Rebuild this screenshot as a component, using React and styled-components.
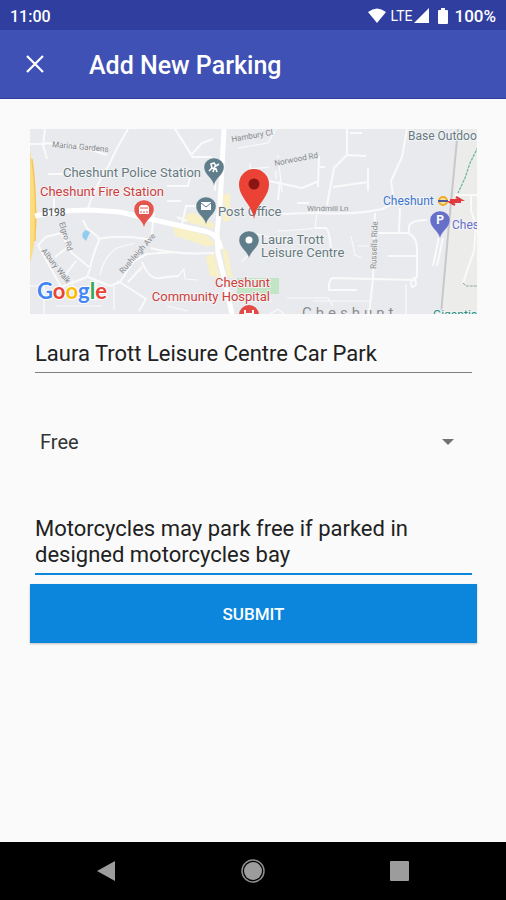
import React, { useState } from 'react'
import styled, { createGlobalStyle } from 'styled-components'

const pinColors = {
    civic: '#607d8b',
    alert: '#e5554f',
    parking: '#6670c8',
}

function Pin({x, y, kind, children}) {
    return (
        <g transform={`translate(${x} ${y})`}>
            <path
                d="M0 18C-1 10-10 7-10-1A10 9 0 0 1 10-1C10 7 1 10 0 18Z"
                fill={pinColors[kind]}
                stroke="#fff"
                strokeOpacity=".5"
                strokeWidth=".6"
            />
            {children}
        </g>
    )
}

function ParkingMap() {
    return (
        <MapStyled viewBox="0 0 447 185" preserveAspectRatio="xMidYMid slice" role="img" aria-label="Map of Cheshunt">
            <rect width="448" height="185" fill="#e9eaed" />
            <path d="M428 0L419 95L411 185H448V0Z" fill="#ececea" />
            <path d="M0 20Q5 55 7 88Q6 112 0 134Z" fill="#fbdc84" />
            <path d="M2 30Q7 65 5 112" fill="none" stroke="#f5c653" strokeWidth="1.5" />
            <path className="shop" d="M155 87L162 83L184 95V100L157 93ZM143 96L158 101L178 107L185 115L178 118L158 111L145 107ZM193 66L200 64L201 91L193 93ZM176 128L184 124L190 149L180 147ZM192 119L197 121L203 149L197 147Z" />
            <path d="M207 149H249V165H207Z" fill="#c1e5c5" />
            <path d="M55 101L60 103L56 112Q49 107 55 101Z" fill="#8fcdf3" />

            <g className="minor">
                <path d="M0 15H16M15 0L13 16L17 30M15 14L48 17L77 26M18 45H33M24 69V79" />
                <path d="M98 0Q85 22 79 36Q66 56 58 79M145 0L163 29" />
                <path d="M53 91L57 99L68 108L69 112Q63 124 60 140L57 148L31 158L8 116L16 108L31 104L42 124L59 138" />
                <path d="M68 110Q91 105 121 111L124 84M25 128L38 118M36 145L46 132M58 148L80 157L90 153L104 132L117 125L144 123" />
                <path className="thin" d="M70 146Q74 127 87 119L105 114M84 157V181M66 152V172M42 150L44 164L78 168" />
                <path d="M88 152L116 170L109 182M98 153L112 138M112 133Q120 154 135 148L149 147" />
                <path className="thin" d="M0 157H14V185M26 177H72M137 177L158 182M148 147L154 140L155 150L168 151" />
                <path d="M121 119Q143 126 184 124" />
                <path d="M145 0L163 28H182M161 26L172 14L183 10M137 57H158L161 45M137 72H151" />
                <path d="M152 95L156 77H168M185 48V62M147 88L157 92" />
                <path className="thin" d="M208 19L238 14L246 0M220 34V40L240 38M248 26L252 63M246 42L246 50" />
                <path d="M239 52L272 59L289 52M289 27L288 58M289 38H295M250 52L248 71M267 74H279" />
                <path className="thin" d="M222 104L239 108M219 107V126L212 132M203 172H242M247 102Q271 101 285 99L287 84" />
                <path d="M285 99H296Q299 101 301 119M242 83L254 85Q270 84 288 84V79" />
                <path d="M317 0V26L304 39L297 76M320 4H332M316 26L336 27M303 58L338 53M338 39V62" />
                <path d="M377 0L372 28L361 52L363 66M288 84Q326 86 352 80L376 69M345 84L343 150L339 185" />
                <path d="M348 104H378Q387 108 387 119V148Q379 150 382 158Q388 157 385 150M370 79L369 103M379 104V98Q380 91 397 91M358 127H387" />
                <path d="M299 162V154L302 149L385 151M300 161H327" />
                <path className="thin" d="M321 107L325 126L332 129M328 117H339M257 169H298L303 177M376 155V185" />
                <path d="M409 108L403 137M413 109L407 137M425 66H448M441 66V82L446 96L444 122L433 154" />
                <path className="thin" d="M283 172H340M240 185L248 180L254 185" />
            </g>
            <g className="major">
                <path d="M5 87Q29 81 60 81L90 83L133 93L178 103Q189 107 191 120" />
                <path d="M194 0L190 76L187 104L188 124L195 153L202 185" />
            </g>
            <g fill="none">
                <path d="M428 0L419 95L411 185" stroke="#c8c8ca" strokeWidth="2" />
                <path d="M448 18L440 34L435 49L428 64" stroke="#70b9a2" strokeWidth="1.3" strokeDasharray="3 1" />
                <path d="M433 154L436 157H448" stroke="#8ea79b" strokeDasharray="3 1" />
            </g>

            <g className="street">
                <text x="22" y="18" transform="rotate(5 22 18)">Marina Gardens</text>
                <text x="202" y="13" transform="rotate(-10 202 13)">Hambury Cl</text>
                <text x="245" y="37" transform="rotate(-11 245 37)">Norwood Rd</text>
                <text x="277" y="82">Windmill Ln</text>
                <text x="29" y="94" transform="rotate(73 29 94)">Elgro Rd</text>
                <text x="11" y="122" transform="rotate(52 11 122)">Albury Walk</text>
                <text x="93" y="145" transform="rotate(-49 93 145)">Rushleigh Ave</text>
                <text x="346" y="140" transform="rotate(-88 346 140)">Russells Ride</text>
            </g>
            <text className="route" x="12" y="87">B198</text>
            <g className="place">
                <text x="33" y="48">Cheshunt Police Station</text>
                <text x="188" y="87">Post Office</text>
                <text x="231" y="115">Laura Trott</text>
                <text x="231" y="128">Leisure Centre</text>
            </g>
            <text className="place small" x="378" y="11">Base Outdoor</text>
            <g className="place red">
                <text x="10" y="67">Cheshunt Fire Station</text>
                <text x="240" y="158" textAnchor="end">Cheshunt</text>
                <text x="240" y="172" textAnchor="end">Community Hospital</text>
            </g>
            <text className="place small blue" x="353" y="76">Cheshunt</text>
            <text className="place small violet" x="422" y="100">Cheshunt</text>
            <text className="town" x="272" y="189">Cheshunt</text>
            <text className="place small teal" x="403" y="190">Gigantic</text>

            <circle cx="413" cy="72" r="4" fill="#f3e3b0" stroke="#efad21" strokeWidth="2" />
            <path d="M408 72H418" stroke="#4b5a9d" strokeWidth="2" />
            <path d="M420 71H431L426 68M431 73H420L425 76" fill="none" stroke="#e0393e" strokeWidth="2.2" />

            <Pin x={184} y={39} kind="civic">
                <path d="M-5 3L-2 0L-3-4L0-5L2-2L5-4M-2 0L2 1L3 4M1-2L-1 4" fill="none" stroke="#fff" strokeWidth="1.6" />
            </Pin>
            <Pin x={176} y={78} kind="civic">
                <path d="M-5-5H5V3H-5Z" fill="#fff" />
                <path d="M-5-4L0 0L5-4" fill="none" stroke="#607d8b" />
            </Pin>
            <Pin x={219} y={112} kind="civic">
                <circle cy="-1" r="3.5" fill="#fff" />
            </Pin>
            <Pin x={114} y={81} kind="alert">
                <path d="M-5-3L-3-5H3L5-3V4H-5Z" fill="#fff" />
                <path d="M-4-2H4M-3 1V3M0 1V3M3 1V3" stroke="#e5554f" />
            </Pin>
            <Pin x={410} y={92} kind="parking">
                <text className="glyph" y="3">P</text>
            </Pin>
            <circle cx="219" cy="186" r="10" fill="#e34b46" />
            <path d="M215 190V181M223 190V181M215 185H223" stroke="#fff" strokeWidth="2" />

            <path d="M224 90C222 75 209 69 209 55A15 15 0 0 1 239 55C239 69 226 75 224 90Z" fill="#ea4335" />
            <circle cx="224" cy="55" r="5.500" fill="#8b1512" />

            <text className="google" x="7" y="170">
                <tspan fill="#4285f4">G</tspan>
                <tspan fill="#ea4335">o</tspan>
                <tspan fill="#fbbc05">o</tspan>
                <tspan fill="#4285f4">g</tspan>
                <tspan fill="#34a853">l</tspan>
                <tspan fill="#ea4335">e</tspan>
            </text>
        </MapStyled>
    )
}

function App() {
    const [name, setName] = useState('Laura Trott Leisure Centre Car Park')
    const [price, setPrice] = useState('free')
    const [notes, setNotes] = useState('Motorcycles may park free if parked in designed motorcycles bay')

    return (
        <>
            <GlobalStyle />
            <ScreenStyled>
                <StatusBar>
                    <span>11:00</span>
                    <StatusIcons>
                        <svg width="20" height="16" viewBox="0 0 20 16">
                            <path d="M1 4Q10-3 19 4L10 15Z" fill="#fff" />
                        </svg>
                        <small>LTE</small>
                        <svg width="16" height="16" viewBox="0 0 16 16">
                            <path d="M15 0V15H0Z" fill="#fff" />
                        </svg>
                        <svg className="battery" width="10" height="16" viewBox="0 0 10 16">
                            <path d="M3 0H7V2H9Q10 2 10 3V15Q10 16 9 16H1Q0 16 0 15V3Q0 2 1 2H3Z" fill="#fff" />
                        </svg>
                        <strong>100%</strong>
                    </StatusIcons>
                </StatusBar>
                <AppBar>
                    <IconButton type="button" aria-label="Close">
                        <svg width="18" height="18" viewBox="0 0 18 18">
                            <path d="M1 1L17 17M17 1L1 17" stroke="#fff" strokeWidth="2.200" />
                        </svg>
                    </IconButton>
                    <h1>Add New Parking</h1>
                </AppBar>
                <FormStyled onSubmit={(e) => e.preventDefault()}>
                    <ParkingMap />
                    <NameInput
                        aria-label="Parking name"
                        value={name}
                        onChange={(e) => setName(e.target.value)}
                    />
                    <SelectCon>
                        <select aria-label="Price" value={price} onChange={(e) => setPrice(e.target.value)}>
                            <option value="free">Free</option>
                            <option value="paid">Paid</option>
                        </select>
                        <svg width="14" height="7" viewBox="0 0 14 7">
                            <path d="M1 0H13L7 6Z" fill="#737373" />
                        </svg>
                    </SelectCon>
                    <NotesInput
                        aria-label="Notes"
                        rows={2}
                        value={notes}
                        onChange={(e) => setNotes(e.target.value)}
                    />
                    <SubmitButton type="submit">SUBMIT</SubmitButton>
                </FormStyled>
                <NavBar>
                    <button type="button" aria-label="Back">
                        <svg width="24" height="24" viewBox="0 0 24 24">
                            <path d="M21 2V22L3 12Z" fill="#9c9c9c" />
                        </svg>
                    </button>
                    <button type="button" aria-label="Home">
                        <svg width="24" height="24" viewBox="0 0 24 24">
                            <circle cx="12" cy="12" r="11" fill="none" stroke="#8d8d8d" strokeWidth="1.500" />
                            <circle cx="12" cy="12" r="9" fill="#9c9c9c" />
                        </svg>
                    </button>
                    <button type="button" aria-label="Recent apps">
                        <svg width="24" height="24" viewBox="0 0 24 24">
                            <rect x="2" y="2" width="19" height="20" rx="1" fill="#9c9c9c" />
                        </svg>
                    </button>
                </NavBar>
            </ScreenStyled>
        </>
    )
}

const GlobalStyle = createGlobalStyle`
    *{
        box-sizing: border-box;
    }
    body{
        margin: 0;
        background: #fafafa;
        font-family: Roboto, "Liberation Sans", sans-serif;
    }
    button, input, select, textarea{
        font-family: inherit;
        border: none;
        border-radius: 0;
        margin: 0;
        outline: none;
    }
    svg{
        display: block;
        flex: none;
    }
`

const ScreenStyled = styled.div`
    min-height: 100vh;
    display: flex;
    flex-direction: column;
    background: #fafafa;
`

const StatusBar = styled.div`
    height: 30px;
    padding: 2px 10px 0;
    display: flex;
    align-items: center;
    justify-content: space-between;
    background: #303e9f;
    color: #fff;
    font-size: 16px;
    font-weight: 500;
`

const StatusIcons = styled.div`
    display: flex;
    align-items: center;
    small{
        margin: 0 2px 0 4px;
        font-size: 14px;
        font-weight: 400;
    }
    strong{
        font-size: 17px;
        font-weight: 500;
    }
    .battery{
        margin: 0 6px 0 8px;
    }
`

const AppBar = styled.header`
    height: 69px;
    padding: 0 14px;
    display: flex;
    align-items: center;
    gap: 33px;
    background: #3f51b5;
    border-bottom: 1px solid #303e9f;
    color: #fff;
    h1{
        margin: 0;
        padding-top: 2px;
        font-size: 25px;
        font-weight: 500;
    }
`

const IconButton = styled.button`
    width: 42px;
    height: 42px;
    padding: 0;
    display: flex;
    align-items: center;
    justify-content: center;
    background: transparent;
    cursor: pointer;
`

const FormStyled = styled.form`
    flex: 1;
    padding: 30px 29px 30px 30px;
    display: flex;
    flex-direction: column;
`

const MapStyled = styled.svg`
    width: 100%;
    height: 185px;
    overflow: hidden;
    .shop{
        fill: #f8f0c6;
    }
    .minor{
        fill: none;
        stroke: #fafafb;
        stroke-width: 2;
        stroke-linejoin: round;
    }
    .thin{
        stroke-width: 1.2;
    }
    .major{
        fill: none;
        stroke: #fff;
        stroke-width: 5;
    }
    .street{
        fill: #85888b;
        font-size: 8px;
    }
    .route{
        fill: #55595d;
        font-size: 10px;
        font-weight: 500;
    }
    .place{
        fill: #667a82;
        font-size: 13px;
        paint-order: stroke;
        stroke: #f3f3f4;
        stroke-width: 2px;
    }
    .small{
        font-size: 12px;
    }
    .red{
        fill: #cc4040;
    }
    .blue{
        fill: #3d76cf;
    }
    .violet{
        fill: #6670c8;
    }
    .teal{
        fill: #25907f;
    }
    .town{
        fill: #8b8d90;
        font-size: 15px;
        letter-spacing: 4px;
    }
    .glyph{
        fill: #fff;
        font-size: 12px;
        font-weight: 700;
        text-anchor: middle;
    }
    .google{
        font-family: Lato, sans-serif;
        font-size: 22px;
        font-weight: 700;
        paint-order: stroke;
        stroke: #fff;
        stroke-width: 2px;
    }
`

const NameInput = styled.input`
    margin: 20px 5px 0;
    padding: 0;
    height: 39px;
    background: transparent;
    border-bottom: 1px solid #808080;
    color: #212121;
    font-size: 22px;
`

const SelectCon = styled.div`
    margin-top: 49px;
    height: 40px;
    padding-right: 22px;
    display: grid;
    align-items: center;
    select{
        grid-area: 1 / 1;
        height: 40px;
        padding: 0 10px;
        appearance: none;
        background: transparent;
        color: #333;
        font-size: 20px;
    }
    svg{
        grid-area: 1 / 1;
        justify-self: end;
        pointer-events: none;
    }
`

const NotesInput = styled.textarea`
    margin: 54px 5px 0;
    padding: 0 0 5px;
    height: 59px;
    background: transparent;
    border-bottom: 2px solid #0b86dc;
    color: #212121;
    font-size: 22px;
    line-height: 26px;
    resize: none;
    overflow: hidden;
`

const SubmitButton = styled.button`
    margin-top: 9px;
    height: 59px;
    background: #0b86dc;
    box-shadow: 0 1px 2px rgba(0, 0, 0, .25);
    color: #fff;
    font-size: 17px;
    font-weight: 500;
    cursor: pointer;
`

const NavBar = styled.nav`
    height: 58px;
    padding: 0 32px;
    display: flex;
    align-items: center;
    justify-content: space-around;
    background: #000;
    button{
        padding: 0;
        background: transparent;
        cursor: pointer;
    }
`

export default App
